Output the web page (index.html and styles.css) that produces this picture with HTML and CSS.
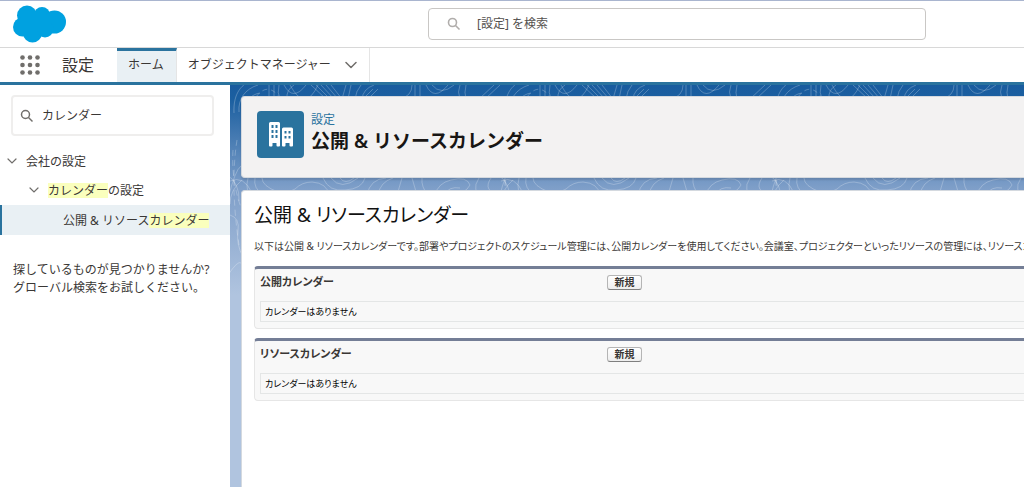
FILE: index.html
```html
<!DOCTYPE html>
<html lang="ja">
<head>
<meta charset="utf-8">
<title>公開 &amp; リソースカレンダー</title>
<link rel="stylesheet" href="styles.css">
</head>
<body>
<header class="topbar">
  <a class="logo" href="#" aria-label="ホームへ">
    <svg width="54" height="38" viewBox="0 0 54 38" fill="#00a1e0" aria-hidden="true">
      <circle cx="14" cy="10.500" r="10"/><circle cx="29" cy="10" r="8"/><circle cx="41.500" cy="17" r="11.500"/><circle cx="9.500" cy="22" r="9.500"/><circle cx="19.500" cy="28" r="9.500"/><circle cx="32" cy="24" r="8.500"/><path d="M10 10h28v16H10z"/>
    </svg>
  </a>
  <label class="global-search">
    <svg width="14" height="14" viewBox="0 0 14 14" fill="none" stroke="#b0adab" stroke-width="1.600" aria-hidden="true"><circle cx="5.500" cy="5.500" r="4"/><path d="M8.500 8.500l4 4"/></svg>
    <input type="text" placeholder="[設定] を検索" aria-label="[設定] を検索">
  </label>
</header>
<nav class="navbar">
  <button class="launcher" type="button" aria-label="アプリケーションランチャー">
    <svg width="20" height="20" viewBox="0 0 20 20" fill="#706e6b" aria-hidden="true">
      <circle cx="2.500" cy="2.500" r="2.300"/><circle cx="10" cy="2.500" r="2.300"/><circle cx="17.500" cy="2.500" r="2.300"/>
      <circle cx="2.500" cy="10" r="2.300"/><circle cx="10" cy="10" r="2.300"/><circle cx="17.500" cy="10" r="2.300"/>
      <circle cx="2.500" cy="17.500" r="2.300"/><circle cx="10" cy="17.500" r="2.300"/><circle cx="17.500" cy="17.500" r="2.300"/>
    </svg>
  </button>
  <span class="app-name">設定</span>
  <a class="tab tab-active" href="#">ホーム</a>
  <div class="tab tab-menu">
    <a href="#">オブジェクトマネージャー</a>
    <button type="button" aria-label="メニューを開く"><svg width="12" height="8" viewBox="0 0 12 8" fill="none" stroke="#706e6b" stroke-width="1.500" stroke-linecap="round" stroke-linejoin="round" aria-hidden="true"><path d="M1 1.500l5 5 5-5"/></svg></button>
  </div>
</nav>
<div class="workspace">
  <aside class="sidebar">
    <label class="quick-find">
      <svg width="14" height="14" viewBox="0 0 14 14" fill="none" stroke="#706e6b" stroke-width="1.500" aria-hidden="true"><circle cx="5.500" cy="5.500" r="4"/><path d="M8.500 8.500l4 4"/></svg>
      <input type="text" value="カレンダー" aria-label="クイック検索">
    </label>
    <ul class="tree">
      <li><a class="node level-1" href="#"><svg class="chevron" width="10" height="7" viewBox="0 0 10 7" fill="none" stroke="#706e6b" stroke-width="1.200" stroke-linecap="round" aria-hidden="true"><path d="M1 1l4 4 4-4"/></svg><span>会社の設定</span></a></li>
      <li><a class="node level-2" href="#"><svg class="chevron" width="10" height="7" viewBox="0 0 10 7" fill="none" stroke="#706e6b" stroke-width="1.200" stroke-linecap="round" aria-hidden="true"><path d="M1 1l4 4 4-4"/></svg><span><mark>カレンダー</mark>の設定</span></a></li>
      <li><a class="node level-3" href="#" aria-current="page"><span>公開 &amp; リソース<mark>カレンダー</mark></span></a></li>
    </ul>
    <p class="hint">探しているものが見つかりませんか?<br>グローバル検索をお試しください。</p>
  </aside>
  <main class="main">
    <svg class="contours" width="100%" height="100%" aria-hidden="true">
      <defs>
        <pattern id="topo" width="271" height="210" patternUnits="userSpaceOnUse">
          <g fill="none" stroke="#fff" stroke-opacity=".24">
            <path d="M4 28C3 8 12-2 24-5M9 27C8 14 15 4 28 0M14 24c1-8 8-15 16-16"/>
            <path d="M26 12Q38-4 50 13" stroke-dasharray="5 4"/>
            <path d="M39 0v14M44 0v14M49 0q-2 8 1 14M64 0q-8 5-7 14M54 0q9 17 22 0M60 0q15 28 28 0M81 0l15 14M86 0l14 14M91 0l13 14M96 0l12 14M101 0l11 14M112 14l4-14M118 14l3-14M125 14q1-8 6-14M132 14q1-10 12-14"/>
            <path d="M143 4l-10 10M148 4l-10 10M170 14q12-3 12-14M185 0v14M190 0v14M196 0q8 17 22 0M202 0q9 11 22 0M230 0q-3 7 0 14M236 0q-2 8 0 14M249 14l15-14M255 14l15-14"/>
            <path d="M3 65q-2 35 11 65M7 55q-7 45 2 105" stroke-dasharray="6 4"/>
            <path d="M-2 114q7-29 13-33M-4 89q14 9 13 27M0 119q0-14 12-24M0 96q14-6 22 12"/>
            <path d="M18 93q-4 15 6 17M25 93q-2 10 8 17M32 93q0 8 16 14 8 2 17-3 7-7 17-7 15 1 17 13"/>
            <path d="M93 93q6 14 22 12 17-1 20-12M101 93q10 13 27 0M110 93q5 7 14 0M137 110q3-16 19-17M148 110q2-13 15-17M167 110l5-17M182 93l5 17M192 93q-1 9 6 17"/>
            <path d="M205 110q3-12 16-15 16-4 19 5-5 9-17 10M214 110q5-9 16-7M249 93q-9 14 5 17M261 93q-9 13 9 17"/>
            <path d="M0 130q10 3 8 16t5 26M-2 190q10-15 13-12"/>
          </g>
        </pattern>
      </defs>
      <rect width="100%" height="210" fill="url(#topo)"/>
    </svg>
    <section class="page-header">
      <span class="page-icon">
        <svg width="24" height="25" viewBox="0 0 24 25" aria-hidden="true">
          <path fill="#fff" fill-rule="evenodd" d="M1.500 0h8Q11 0 11 1.500V23.500q0 1-1 1H8.500q-1 0-1-1V21h-4v2.500q0 1-1 1H1q-1 0-1-1v-22Q0 0 1.500 0zM2.500 3v3h2V3zm4 0v3h2V3zm-4 5v3h2V8zm4 0v3h2V8zm-4 5v3h2v-3zm4 0v3h2v-3zM14.500 5.500h8Q24 5.500 24 7v16.500q0 1-1 1h-1.500q-1 0-1-1V21h-4v2.500q0 1-1 1H14q-1 0-1-1V7q0-1.500 1.500-1.500zm1 3.500v2.500h2V9zm4 0v2.500h2V9zm-4 5v2.500h2V14zm4 0v2.500h2V14z"/>
        </svg>
      </span>
      <div class="page-title">
        <p>設定</p>
        <h1>公開 &amp; リソースカレンダー</h1>
      </div>
    </section>
    <section class="content">
      <h2>公開 &amp; リソースカレンダー</h2>
      <p class="description">以下は公開 &amp; リソースカレンダーです。部署やプロジェクトのスケジュール管理には、公開カレンダーを使用してください。会議室、プロジェクターといったリソースの管理には、リソースカレ</p>
      <section class="related">
        <div class="related-head"><h3>公開カレンダー</h3><button type="button">新規</button></div>
        <table><tbody><tr><td>カレンダーはありません</td></tr></tbody></table>
      </section>
      <section class="related">
        <div class="related-head"><h3>リソースカレンダー</h3><button type="button">新規</button></div>
        <table><tbody><tr><td>カレンダーはありません</td></tr></tbody></table>
      </section>
    </section>
  </main>
</div>
</body>
</html>
```
FILE: styles.css
```css
* { box-sizing: border-box; }
body {
  margin: 0;
  min-height: 100vh;
  display: flex;
  flex-direction: column;
  overflow-x: hidden;
  background: #fff;
  color: #3a3735;
  font: 12px/18px "Noto Sans", "Noto Sans CJK JP", sans-serif;
}
h1, h2, h3, p, ul { margin: 0; padding: 0; }
ul { list-style: none; }
a { color: inherit; text-decoration: none; }
button, input { font: inherit; color: inherit; }
svg { display: block; flex: none; }

.topbar {
  display: grid;
  grid-template-columns: 428px minmax(200px, 498px) 1fr;
  align-items: center;
  height: 48px;
  border-top: 1px solid #a9b5cf;
  border-bottom: 1px solid #d8d8d8;
}
.logo { justify-self: start; margin-left: 13px; }
.global-search {
  display: flex;
  align-items: center;
  gap: 16px;
  height: 32px;
  padding: 0 18px;
  border: 1px solid #c9c7c5;
  border-radius: 4px;
}
input {
  flex: 1;
  min-width: 0;
  padding: 0;
  border: 0;
  outline: 0;
  background: none;
}
input::placeholder { color: #54514e; opacity: 1; }

.navbar {
  display: flex;
  height: 37px;
  border-bottom: 3px solid #2a739e;
}
.launcher {
  padding: 0 20px;
  border: 0;
  background: none;
}
.app-name {
  width: 57px;
  padding-left: 2px;
  font-size: 16px;
  line-height: 34px;
}
.tab {
  display: flex;
  align-items: center;
  padding: 0 12px 0 11px;
  border-right: 1px solid #e5e5e5;
}
.tab-active {
  border-top: 3px solid #2a739e;
  padding-bottom: 3px;
  background: #e9f0f4;
}
.tab-menu { gap: 14px; }
.tab-menu button {
  padding: 0;
  border: 0;
  background: none;
}

.workspace { display: flex; flex: 1; }
.sidebar {
  flex: none;
  width: 230px;
  padding-top: 10px;
}
.quick-find {
  display: flex;
  align-items: center;
  gap: 8px;
  height: 41px;
  margin: 0 16px 11px 11px;
  padding: 0 7px;
  border: 2px solid #efeeed;
  border-radius: 4px;
}
.node {
  display: flex;
  align-items: center;
  height: 29px;
}
.level-1 { padding-left: 7px; gap: 9px; }
.level-2 { padding-left: 29px; gap: 9px; }
.level-3 {
  height: 30px;
  padding-left: 61px;
  border-left: 2px solid #2a739e;
  background: #e9f0f4;
}
.node span { line-height: 15px; white-space: nowrap; }
mark {
  display: inline-block;
  background: #faffbd;
  color: inherit;
}
.hint { margin: 26px 0 0 13px; white-space: nowrap; }

.main {
  position: relative;
  display: flex;
  flex-direction: column;
  gap: 12px;
  flex: 1;
  min-width: 0;
  padding: 11px 0 0 11px;
  background: #b0c4df linear-gradient(#195c9f 0, #1b5fa0 14px, #7f9fc9 104px, #b0c4df 210px) no-repeat 0 0 / 100% 210px;
}
.contours { position: absolute; inset: 0; }
.page-header, .content {
  position: relative;
  border: 1px solid #d4d9df;
  border-right: 0;
}
.page-header {
  display: flex;
  gap: 7px;
  height: 82px;
  padding: 14px 15px;
  border-radius: 4px 0 0 4px;
  background: #f3f2f2;
  box-shadow: 0 2px 2px rgba(0, 0, 0, .12);
}
.page-icon {
  display: grid;
  place-items: center;
  flex: none;
  width: 47px;
  height: 47px;
  border-radius: 4px;
  background: #2a739e;
}
.page-title p { color: #2a739e; line-height: 18px; }
.page-title h1 {
  color: #181614;
  font-size: 19px;
  font-weight: 600;
  line-height: 24px;
  white-space: nowrap;
}
.content {
  flex: 1;
  padding: 9px 0 0 12px;
  border-bottom: 0;
  border-radius: 4px 0 0 0;
  background: #fff;
  overflow: hidden;
  font-feature-settings: "palt";
}
.content h2 {
  color: #111;
  font-size: 19px;
  font-weight: 400;
  line-height: 30px;
}
.description {
  margin: 7px 0 11px;
  font-size: 10px;
  white-space: nowrap;
}
.related {
  margin-bottom: 9px;
  padding: 0 0 6px 5px;
  border: 1px solid #e6e6e6;
  border-top: 3px solid #747e96;
  border-right: 0;
  border-radius: 4px 0 0 4px;
  background: #f8f8f8;
}
.related-head {
  display: grid;
  grid-template-columns: 347px auto;
  justify-content: start;
  align-items: center;
  height: 32px;
  padding-bottom: 6px;
}
.related-head h3 {
  font-size: 11px;
  font-weight: 700;
}
.related-head button {
  width: 35px;
  height: 15px;
  padding: 0;
  border: 1px solid #b5b5b5;
  border-bottom-color: #7f7f7f;
  border-radius: 3px;
  background: linear-gradient(#fff, #eee);
  font-size: 10px;
  font-weight: 700;
  line-height: 12px;
}
table {
  width: 100%;
  border: 1px solid #e4e6e6;
  border-right: 0;
  border-spacing: 0;
}
td {
  height: 19px;
  padding: 0 4px;
  color: #000;
  font-size: 9px;
  line-height: 18px;
}
```
